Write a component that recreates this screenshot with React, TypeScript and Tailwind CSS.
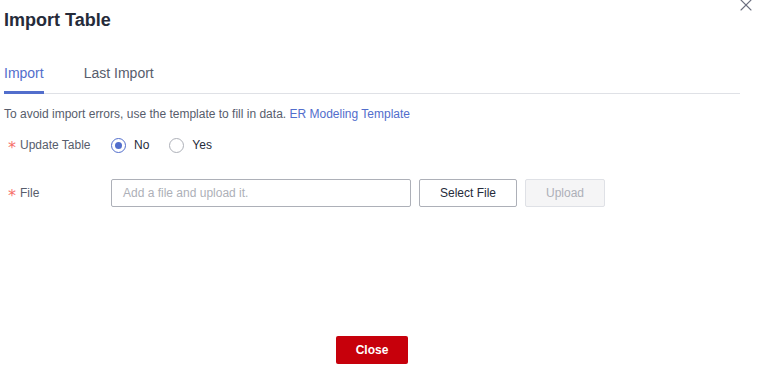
import { X } from "lucide-react";

const Star = () => (
  <span
    className="text-[#f66f6a] w-[12px] h-[12px] text-[16px] leading-none translate-y-[1px]"
    style={{ fontFamily: '"DejaVu Sans", sans-serif' }}
  >
    *
  </span>
);

const Radio = ({ checked, label }: { checked?: boolean; label: string }) => (
  <label className="flex items-center gap-[8px] mr-[20px]">
    <span
      className={`w-[15px] h-[15px] rounded-full border flex items-center justify-center ${
        checked ? "border-[#526ecc]" : "border-[#adb0b8]"
      }`}
    >
      {checked && <span className="w-[7px] h-[7px] rounded-full bg-[#526ecc]" />}
    </span>
    <span className="text-[12px] text-[#252b3a]">{label}</span>
  </label>
);

export default function App() {
  return (
    <div
      className="relative w-[758px] h-[371px] bg-white pl-[4px] pt-[8px]"
      style={{ fontFamily: '"Liberation Sans", Arial, sans-serif' }}
    >
      <button className="absolute right-[2px] top-[-5px] text-[#6c7080]">
        <X size={20} strokeWidth={1.3} />
      </button>
      <div className="w-[736px] flex flex-col">
        <h1 className="text-[18px] leading-[24px] font-bold text-[#252b3a]">Import Table</h1>

        <div className="mt-[31px] flex gap-[40px] border-b border-[#dfe1e6]">
          <div className="text-[14px] leading-[20px] pb-[8px] border-b-[3px] border-[#526ecc] -mb-px text-[#526ecc]">
            Import
          </div>
          <div className="text-[14px] leading-[20px] pb-[8px] text-[#575d6c]">Last Import</div>
        </div>

        <p className="mt-[10px] text-[12px] leading-[20px] text-[#575d6c]">
          To avoid import errors, use the template to fill in data.{" "}
          <span className="text-[#526ecc]">ER Modeling Template</span>
        </p>

        <div className="mt-[11px] flex items-center h-[20px]">
          <div className="w-[107px] pl-[4px] text-[12px] text-[#575d6c] flex items-center">
            <Star />
            Update Table
          </div>
          <Radio checked label="No" />
          <Radio label="Yes" />
        </div>

        <div className="mt-[24px] flex items-center">
          <div className="w-[107px] pl-[4px] text-[12px] text-[#575d6c] flex items-center">
            <Star />
            File
          </div>
          <div className="w-[300px] h-[28px] border border-[#adb0b8] rounded-[2px] px-[11px] flex items-center text-[12px] text-[#adb0b8]">
            Add a file and upload it.
          </div>
          <button className="ml-[8px] w-[98px] h-[28px] border border-[#adb0b8] rounded-[2px] text-[12px] text-[#252b3a]">
            Select File
          </button>
          <button className="ml-[8px] w-[80px] h-[28px] border border-[#dfe1e6] bg-[#f5f5f6] rounded-[2px] text-[12px] text-[#adb0b8]">
            Upload
          </button>
        </div>

        <div className="mt-[129px] flex justify-center">
          <button className="w-[72px] h-[28px] bg-[#c7000b] rounded-[2px] text-white text-[12px] font-bold">
            Close
          </button>
        </div>
      </div>
    </div>
  );
}
